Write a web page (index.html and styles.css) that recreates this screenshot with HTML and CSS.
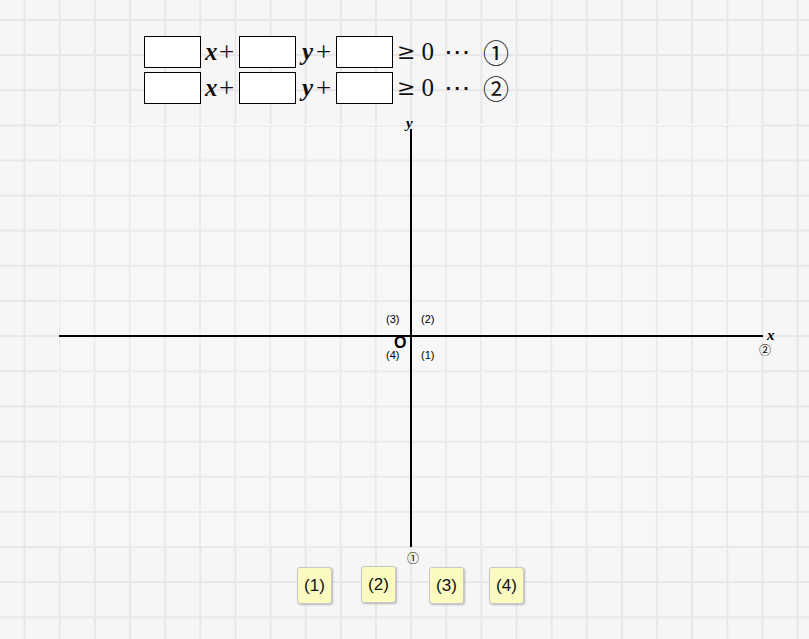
FILE: index.html
```html
<!DOCTYPE html>
<html>
<head>
<meta charset="utf-8">
<link rel="stylesheet" href="styles.css">
</head>
<body>
<div class="page">
  <div class="eqs">
    <div class="row">
      <span class="box"></span><span class="var">x</span><span class="op">+</span>
      <span class="box"></span><span class="var vy">y</span><span class="op">+</span>
      <span class="box"></span><span class="rel">≥</span><span class="num">0</span><span class="dots">⋯</span><span class="circ">①</span>
    </div>
    <div class="row">
      <span class="box"></span><span class="var">x</span><span class="op">+</span>
      <span class="box"></span><span class="var vy">y</span><span class="op">+</span>
      <span class="box"></span><span class="rel">≥</span><span class="num">0</span><span class="dots">⋯</span><span class="circ">②</span>
    </div>
  </div>

  <div class="plane">
    <svg class="axes" width="704" height="422" viewBox="0 0 704 422">
      <line x1="0" y1="211" x2="704" y2="211" stroke="#000" stroke-width="2"/>
      <line x1="352" y1="4" x2="352" y2="422" stroke="#000" stroke-width="2"/>
      <text class="ax" x="708" y="215">x</text>
      <text class="ax" x="347" y="3">y</text>
      <text class="circ-s" x="700" y="230">②</text>
      <text class="circ-s" x="348" y="438">①</text>
      <text class="origin" x="335" y="223">O</text>
      <text class="q" x="327" y="198">(3)</text>
      <text class="q" x="362" y="198">(2)</text>
      <text class="q" x="327" y="234">(4)</text>
      <text class="q" x="362" y="234">(1)</text>
    </svg>
  </div>

  <div class="cards">
    <div class="card c1">(1)</div>
    <div class="card c2">(2)</div>
    <div class="card c3">(3)</div>
    <div class="card c4">(4)</div>
  </div>
</div>
</body>
</html>
```

FILE: styles.css
```css
html, body {
  margin: 0;
  padding: 0;
}
body {
  width: 809px;
  height: 639px;
  overflow: hidden;
  font-family: "Liberation Sans", Arial, sans-serif;
}
.page {
  position: relative;
  width: 809px;
  height: 639px;
  background-color: #f6f6f6;
  background-image:
    linear-gradient(to right, #e7e7e7 1.5px, transparent 1.5px),
    linear-gradient(to bottom, #e7e7e7 1.5px, transparent 1.5px);
  background-size: 35.15px 35.15px;
  background-position: 23.6px 18.9px;
}
.eqs {
  padding: 36px 0 0 144px;
  display: flex;
  flex-direction: column;
  gap: 4px;
}
.row {
  display: flex;
  align-items: center;
  height: 32px;
  font-family: "Liberation Serif", "Times New Roman", serif;
  font-size: 25px;
  line-height: 30px;
  color: #111;
}
.box {
  width: 55px;
  height: 30px;
  border: 1px solid #000;
  background: #fff;
  box-sizing: content-box;
}
.var {
  font-style: italic;
  font-weight: bold;
  margin-left: 4px;
  width: 14px;
}
.var.vy {
  margin-left: 6px;
}
.op {
  margin-right: 3px;
  width: 17px;
  font-size: 27px;
}
.rel {
  margin-left: 4px;
  font-family: "DejaVu Serif", serif;
  font-size: 22px;
}
.num {
  margin-left: 6px;
}
.dots {
  margin-left: 11px;
  font-family: "DejaVu Serif", serif;
  font-size: 24px;
  transform: scaleX(1.1);
}
.circ {
  margin-left: 14px;
  font-family: "Noto Sans CJK JP", "DejaVu Sans", sans-serif;
  font-size: 26px;
  line-height: 28px;
}
.plane {
  position: absolute;
  left: 59px;
  top: 125px;
  width: 703px;
  height: 422px;
  background-color: #f7f7f7;
  background-image:
    linear-gradient(to right, #eaeaea 1.5px, transparent 1.5px),
    linear-gradient(to bottom, #eaeaea 1.5px, transparent 1.5px);
  background-size: 35.15px 35.15px;
  background-position: -0.6px -0.6px;
  box-shadow: 0 -1px 0 #fdfdfd, -1px 0 0 #fbfbfb;
}
.axes {
  position: absolute;
  left: 0;
  top: 0;
  overflow: visible;
}
.axes .ax {
  font-family: "Liberation Serif", serif;
  font-style: italic;
  font-weight: bold;
  font-size: 15px;
}
.axes .circ-s {
  font-family: "Noto Sans CJK JP", "DejaVu Sans", sans-serif;
  font-size: 12px;
}
.axes .origin {
  font-family: "Liberation Sans", Arial, sans-serif;
  font-size: 16px;
  font-weight: bold;
}
.axes .q {
  font-family: "Liberation Sans", Arial, sans-serif;
  font-size: 11px;
}
.cards {
  position: absolute;
  left: 297px;
  top: 565px;
  display: flex;
  align-items: flex-start;
}
.card {
  width: 33px;
  height: 35px;
  border: 1px solid #c8c8c8;
  border-radius: 3px;
  background: #fbfbbf;
  box-shadow: 1px 1px 2px rgba(0, 0, 0, 0.25);
  display: flex;
  align-items: center;
  justify-content: center;
  font-size: 17px;
  color: #111;
}
.c1 { margin-top: 2px; }
.c2 { margin-left: 29px; margin-top: 1px; }
.c3 { margin-left: 33px; margin-top: 2px; }
.c4 { margin-left: 25px; margin-top: 2px; }
```
